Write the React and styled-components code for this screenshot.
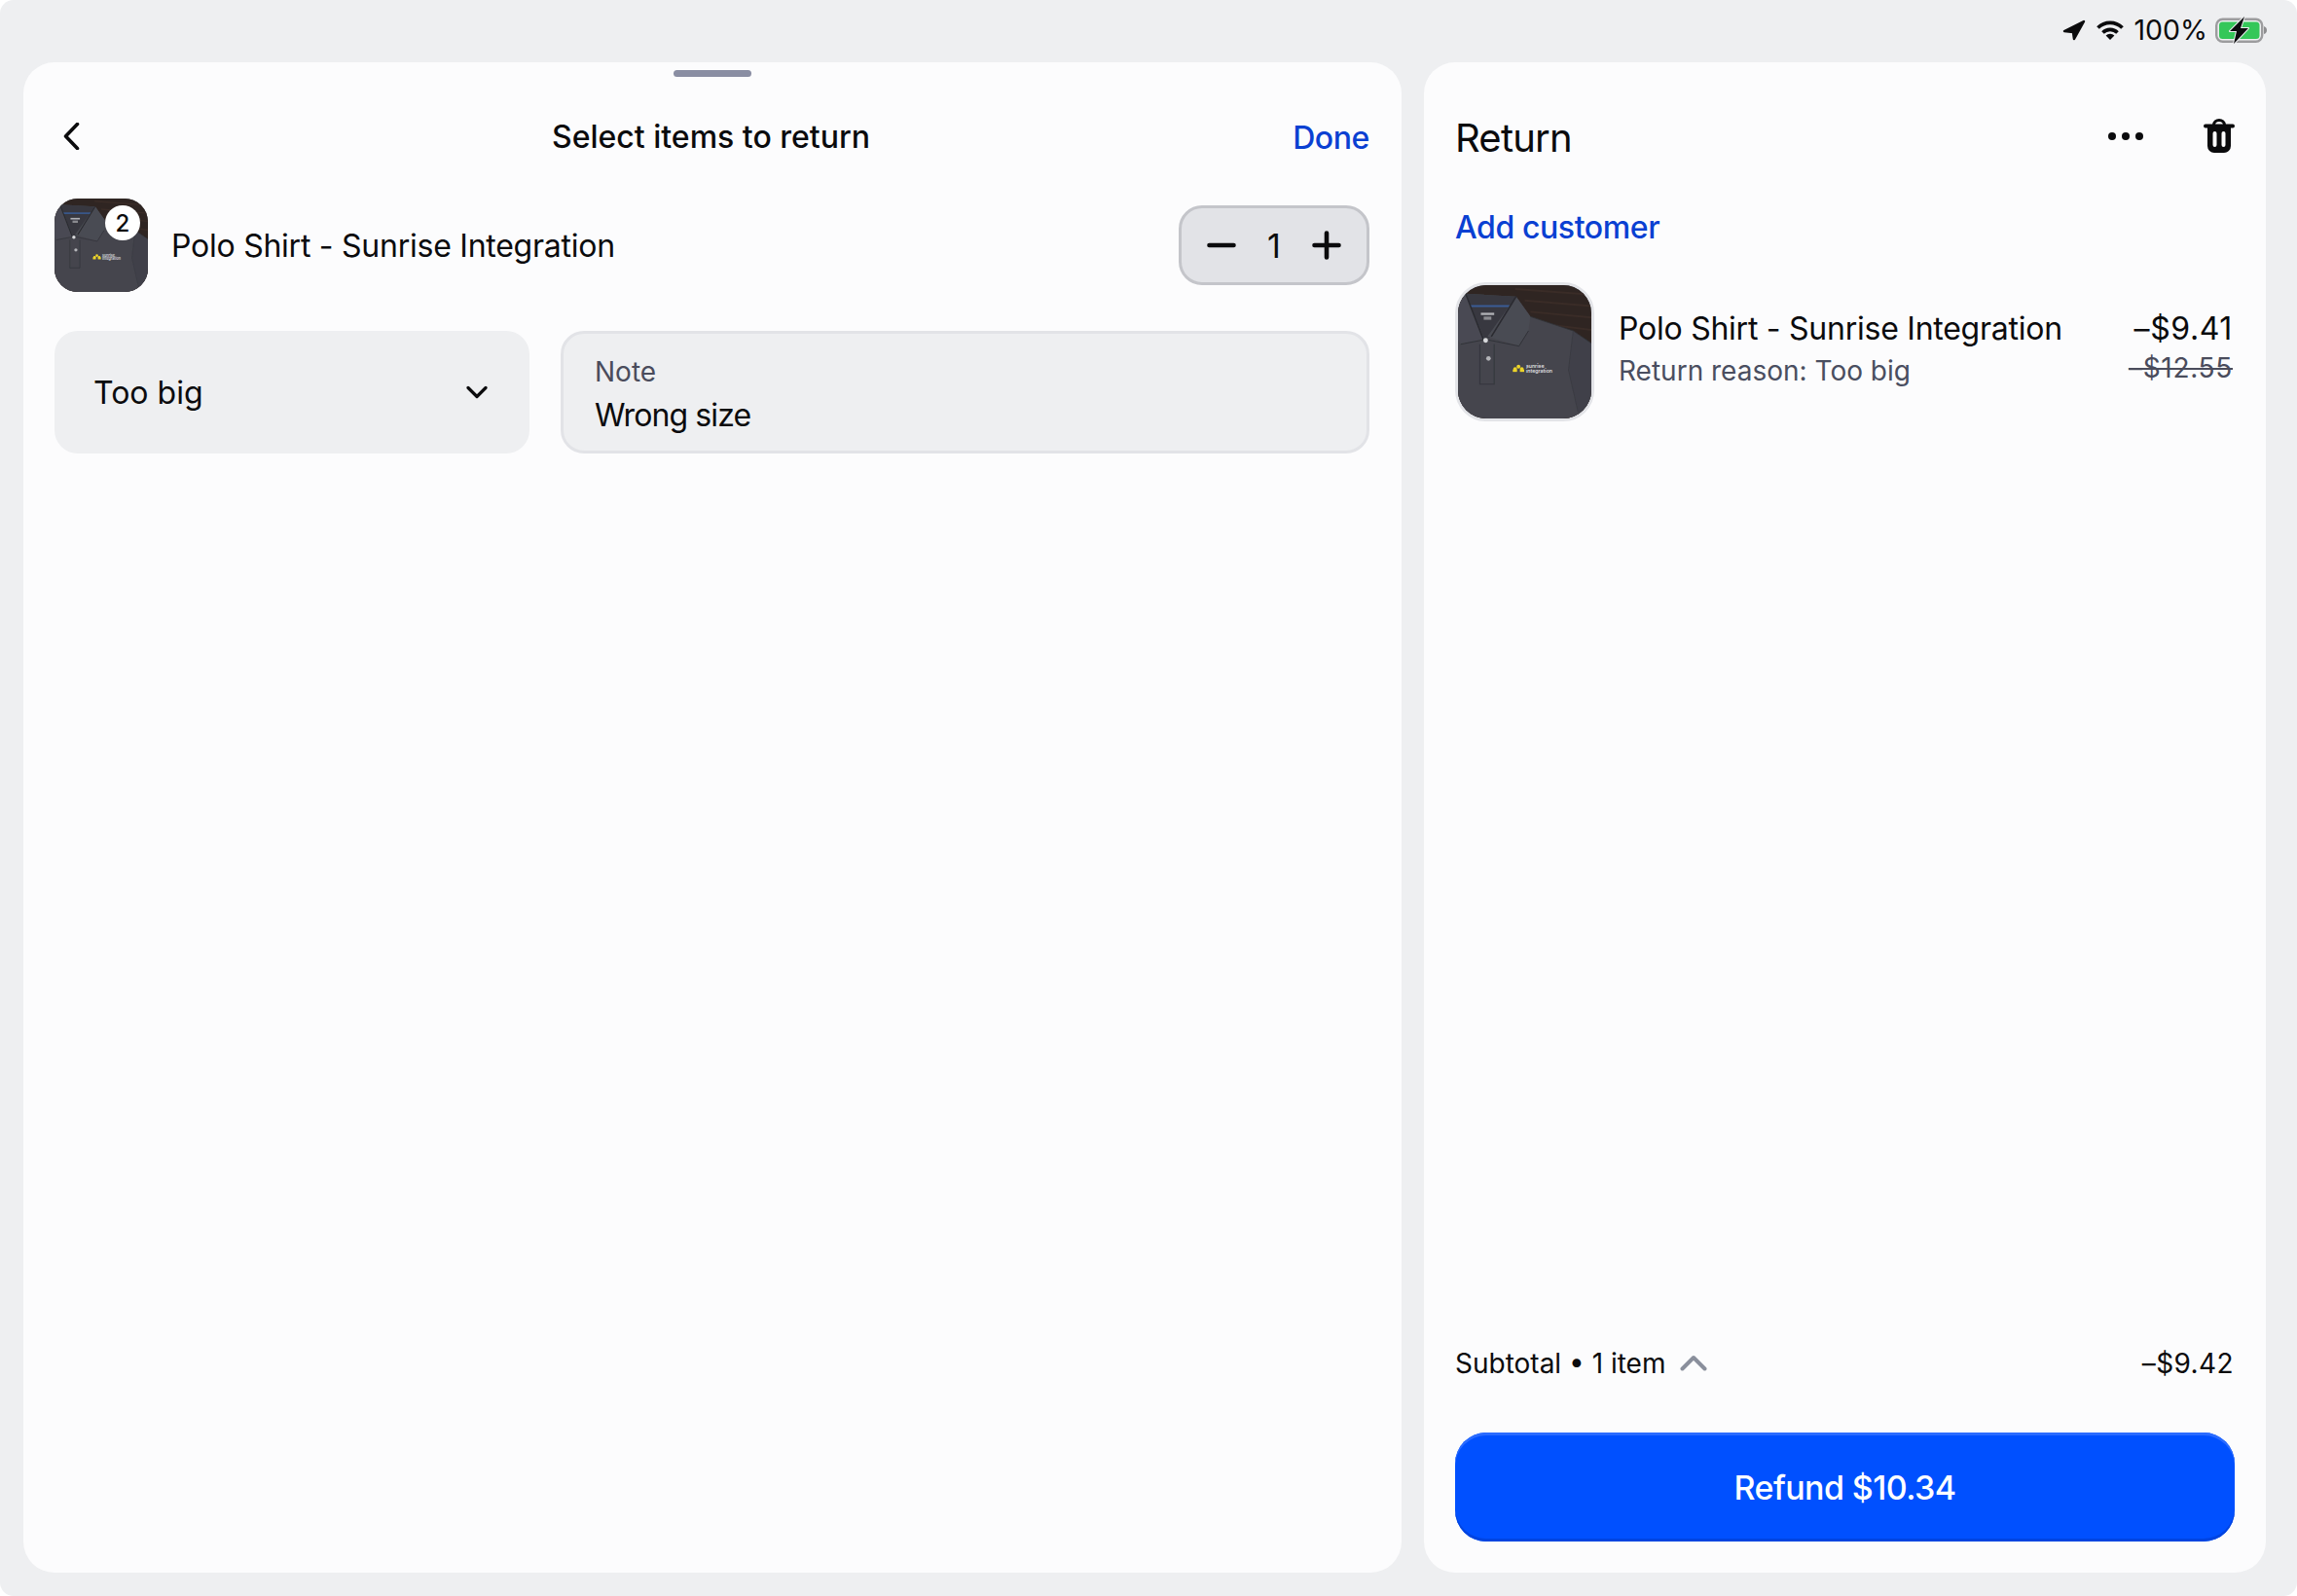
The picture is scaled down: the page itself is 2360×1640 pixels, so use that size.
import React from "react";
import styled, { createGlobalStyle } from "styled-components";

const Global = createGlobalStyle`
  html, body { margin: 0; padding: 0; background: #fff; }
  body { font-family: Inter, "Noto Sans", "Liberation Sans", sans-serif; color: #0b0b0d; }
  * { box-sizing: border-box; }
`;

const Screen = styled.div`
  width: 2360px;
  height: 1640px;
  background: #eeeff1;
  border-radius: 14px;
  display: flex;
  flex-direction: column;
  overflow: hidden;
`;

const StatusBar = styled.div`
  height: 64px;
  display: flex;
  align-items: center;
  justify-content: flex-end;
  padding: 0 30px 2px 0;
`;

const Bars = styled.div`
  display: flex;
  align-items: center;
`;

const StatusText = styled.span`
  font-size: 28.5px;
  line-height: 32px;
  margin: 0 8px 0 9px;
  color: #0b0b0d;
`;

const Main = styled.div`
  flex: 1;
  display: flex;
  gap: 23px;
  padding: 0 32px 24px 24px;
`;

const Panel = styled.section`
  background: #fcfcfd;
  border-radius: 32px;
  padding: 49px 32px ${(p) => p.$bottom || "49px"} 32px;
  display: flex;
  flex-direction: column;
  position: relative;
  width: ${(p) => p.$width || "auto"};
  flex: ${(p) => (p.$grow ? 1 : "none")};
`;

const Handle = styled.div`
  position: absolute;
  top: 8px;
  left: 50%;
  transform: translateX(-50%);
  width: 80px;
  height: 7px;
  border-radius: 4px;
  background: #8a8ea3;
`;

const NavHeader = styled.header`
  height: 56px;
  display: grid;
  grid-template-columns: 1fr auto 1fr;
  align-items: center;
  margin-bottom: 35px;
`;

const BackButton = styled.div`
  display: flex;
  align-items: center;
  padding: 0 0 2px 7px;
`;

const NavTitle = styled.h1`
  margin: 0 3px 0 0;
  font-size: 32px;
  font-weight: 500;
  line-height: 40px;
`;

const DoneLink = styled.span`
  justify-self: end;
  font-size: 32px;
  font-weight: 500;
  letter-spacing: -0.4px;
  margin-right: 1px;
  color: #0a40d2;
`;

const ItemRow = styled.div`
  height: 96px;
  display: flex;
  align-items: center;
  margin-bottom: 40px;
`;

const Thumb = styled.div`
  position: relative;
  flex: none;
  width: ${(p) => p.$size}px;
  height: ${(p) => p.$size}px;
  border-radius: ${(p) => p.$radius}px;
  overflow: hidden;
  border: ${(p) => (p.$framed ? "3px solid #e3e4e8" : "none")};
  background: #44454d;
  svg { display: block; width: 100%; height: 100%; }
`;

const QtyBadge = styled.span`
  position: absolute;
  top: 7px;
  left: 52px;
  width: 36px;
  height: 36px;
  border-radius: 50%;
  background: #fff;
  display: flex;
  align-items: center;
  justify-content: center;
  font-size: 24px;
  font-weight: 500;
  color: #0b0b0d;
`;

const ItemName = styled.div`
  font-size: 32px;
  line-height: 44px;
  letter-spacing: -0.25px;
  color: #0b0b0d;
`;

const RowName = styled(ItemName)`
  flex: 1;
  margin-left: 24px;
  padding-top: 2px;
`;

const Stepper = styled.div`
  width: 196px;
  height: 82px;
  border-radius: 24px;
  background: #e2e3e7;
  border: 3px solid #c4c5ca;
  display: flex;
  align-items: center;
  justify-content: space-between;
  padding: 0 26px;
  margin-right: 1px;
  font-size: 34px;
  color: #0b0b0d;
`;

const Fields = styled.div`
  display: grid;
  grid-template-columns: 488px 1fr;
  gap: 32px;
  margin-right: 1px;
`;

const SelectField = styled.div`
  height: 126px;
  border-radius: 24px;
  background: #eeeff1;
  display: flex;
  align-items: center;
  justify-content: space-between;
  padding: 0 43px 0 40px;
  font-size: 32px;
  color: #0b0b0d;
`;

const NoteField = styled.div`
  height: 126px;
  border-radius: 24px;
  background: #eeeff1;
  border: 3px solid #e2e3e7;
  display: flex;
  flex-direction: column;
  padding: 21px 32px 0;
`;

const NoteLabel = styled.span`
  font-size: 28px;
  line-height: 36px;
  color: #4a4c5c;
`;

const NoteValue = styled.span`
  font-size: 32px;
  line-height: 44px;
  margin-top: 5px;
  letter-spacing: -0.9px;
  color: #0b0b0d;
`;

const CartHeader = styled.header`
  height: 56px;
  display: flex;
  align-items: center;
  justify-content: space-between;
`;

const CartTitle = styled.h2`
  margin: 0;
  font-size: 40px;
  font-weight: 400;
  letter-spacing: -0.8px;
`;

const CartActions = styled.div`
  display: flex;
  align-items: center;
  gap: 62px;
  margin-top: -3px;
`;

const AddCustomer = styled.div`
  margin-top: 45px;
  font-size: 32px;
  font-weight: 500;
  line-height: 40px;
  letter-spacing: -0.4px;
  color: #0a40d2;
`;

const LineItem = styled.div`
  display: flex;
  margin-top: 36px;
`;

const LineText = styled.div`
  flex: 1;
  margin-left: 25px;
  padding-top: 26px;
`;

const SubText = styled.div`
  font-size: 28px;
  line-height: 40px;
  margin-top: 1px;
  color: #4a4e60;
`;

const Prices = styled.div`
  padding-top: 26px;
  padding-right: 2px;
  text-align: right;
`;

const Price = styled.div`
  font-size: 32px;
  line-height: 44px;
  letter-spacing: 0.6px;
  color: #0b0b0d;
`;

const OldPrice = styled.div`
  font-size: 28px;
  line-height: 36px;
  letter-spacing: 0.7px;
  color: #4a4c5c;
  text-decoration: line-through;
`;

const SummaryRow = styled.div`
  margin-top: auto;
  height: 40px;
  display: flex;
  align-items: center;
  justify-content: space-between;
  padding-right: 1px;
  font-size: 28px;
  color: #0b0b0d;
`;

const SummaryLabel = styled.div`
  display: flex;
  align-items: center;
  gap: 15px;
`;

const SummaryValue = styled.span`
  letter-spacing: 0.4px;
`;

const SummaryChevron = styled.svg`
  margin-top: -2px;
`;

const RefundButton = styled.button`
  margin-top: 51px;
  width: 100%;
  height: 112px;
  border: none;
  border-radius: 32px;
  background: #0050ff;
  box-shadow: inset 0 3px 0 #2a6bff, inset 0 -3px 0 #0044e0;
  color: #fff;
  font-family: inherit;
  font-size: 34px;
  font-weight: 500;
  letter-spacing: -0.6px;
`;

const ShirtPhoto = ({ id }) => (
  <svg viewBox="0 0 140 140" aria-hidden="true">
    <defs>
      <filter id={`soft-${id}`}><feGaussianBlur stdDeviation="0.8" /></filter>
    </defs>
    <rect width="140" height="140" fill="#2f2522" />
    <path d="M60 4 L140 10 M70 16 L140 22 M76 28 L140 34 M100 42 L140 47" stroke="#3a2c27" strokeWidth="2" />
    <path d="M0 0 L14 0 L0 14 Z" fill="#5a5048" />
    <g filter={`url(#soft-${id})`}>
      <path d="M0 12 L8 9 L61 12 L76 33 L121 48 L140 61 L140 140 L0 140 Z" fill="#44454d" />
      <path d="M121 48 L116 89 L126 133 L132 140 L140 140 L140 61 Z" fill="#404149" />
      <path d="M8 9 L61 12 L37 54 L28 57 Z" fill="#383940" />
      <path d="M12 22 L54 22" stroke="#3a5c96" strokeWidth="2.2" />
      <rect x="24" y="29" width="14" height="2.4" fill="#b0b1b6" />
      <rect x="27" y="33" width="8" height="3.4" fill="#8a8b90" />
      <path d="M0 12 L8 9 L27 58 L3 62 L0 58 Z" fill="#494a52" />
      <path d="M61 12 L76 33 L74 48 L64 64 L31 54 Z" fill="#4a4b53" />
      <path d="M8 9 L27 58 M61 12 L35 54" stroke="#2a2b30" strokeWidth="1.6" fill="none" />
      <path d="M3 62 L29 57 L64 64 L74 48" fill="none" stroke="#303137" strokeWidth="1" />
      <path d="M76 33 L121 48 L140 61" fill="none" stroke="#303136" strokeWidth="0.9" />
      <path d="M121 48 L116 89 L126 133" fill="none" stroke="#383940" strokeWidth="0.8" />
      <path d="M23 62 L23 104 L38 104 L38 62" fill="none" stroke="#35363c" strokeWidth="1.1" />
      <circle cx="29" cy="58" r="2.5" fill="#d8d9dc" />
      <circle cx="32" cy="77" r="2.4" fill="#b4b5b9" />
    </g>
    <g fill="#ecd42a">
      <circle cx="63.5" cy="85.5" r="2" />
      <circle cx="60" cy="88" r="2" />
      <circle cx="67" cy="88" r="2" />
      <rect x="57.5" y="88.5" width="4.5" height="2.6" />
      <rect x="65" y="88.5" width="4.5" height="2.6" />
    </g>
    <text x="71.5" y="87" fontSize="5.4" fontWeight="500" fontFamily="Inter, sans-serif" fill="#e8e8ea">sunrise</text>
    <text x="71.5" y="91.5" fontSize="5.4" fontWeight="500" fontFamily="Inter, sans-serif" fill="#e8e8ea">integration</text>
  </svg>
);

const App = () => (
  <>
    <Global />
    <Screen>
      <StatusBar>
        <Bars>
          <svg width="24" height="22" viewBox="0 0 24 22">
            <path d="M22 2 L2 12 L11 13 L12 20 Z" fill="#0b0b0d" stroke="#0b0b0d" strokeWidth="2.5" strokeLinejoin="round" />
          </svg>
          <svg width="30" height="22" viewBox="0 0 30 22" style={{ marginLeft: 10 }}>
            <path d="M2.5 8.5 A18 18 0 0 1 27.5 8.5" fill="none" stroke="#0b0b0d" strokeWidth="3.8" />
            <path d="M7.5 13.5 A10.5 10.5 0 0 1 22.5 13.5" fill="none" stroke="#0b0b0d" strokeWidth="3.6" />
            <path d="M15 21 L10.6 16.6 A6 6 0 0 1 19.4 16.6 Z" fill="#0b0b0d" />
          </svg>
          <StatusText>100%</StatusText>
          <svg width="54" height="30" viewBox="0 0 54 30">
            <rect x="1.2" y="3.7" width="47" height="23" rx="6.5" fill="none" stroke="#9c9c9e" strokeWidth="2.4" />
            <rect x="4" y="6.5" width="41.5" height="17.5" rx="3.5" fill="#34c759" />
            <path d="M50 11 Q53 12 53 15 Q53 18 50 19 Z" fill="#8e8e90" />
            <path d="M30 1 L15 16 H22 L19 29 L34 13 H26 Z" fill="#0b0b0d" stroke="#eeeff1" strokeWidth="2" paintOrder="stroke" strokeLinejoin="round" />
          </svg>
        </Bars>
      </StatusBar>
      <Main>
        <Panel $width="1416px">
          <Handle />
          <NavHeader>
            <BackButton>
              <svg width="20" height="28" viewBox="0 0 20 28">
                <path d="M16.5 1.5 L4.5 14 L16.5 26.5" fill="none" stroke="#0b0b0d" strokeWidth="3.6" strokeLinecap="round" strokeLinejoin="round" />
              </svg>
            </BackButton>
            <NavTitle>Select items to return</NavTitle>
            <DoneLink>Done</DoneLink>
          </NavHeader>
          <ItemRow>
            <Thumb $size={96} $radius={24}>
              <ShirtPhoto id="small" />
              <QtyBadge>2</QtyBadge>
            </Thumb>
            <RowName>Polo Shirt - Sunrise Integration</RowName>
            <Stepper>
              <svg width="30" height="6" viewBox="0 0 30 6">
                <path d="M2.5 3 H27.5" stroke="#0b0b0d" strokeWidth="4.6" strokeLinecap="round" />
              </svg>
              <span>1</span>
              <svg width="30" height="30" viewBox="0 0 30 30">
                <path d="M2.5 15 H27.5 M15 2.5 V27.5" stroke="#0b0b0d" strokeWidth="4.6" strokeLinecap="round" />
              </svg>
            </Stepper>
          </ItemRow>
          <Fields>
            <SelectField>
              <span>Too big</span>
              <svg width="22" height="14" viewBox="0 0 22 14">
                <path d="M2 2.5 L11 11.5 L20 2.5" fill="none" stroke="#0b0b0d" strokeWidth="3.2" strokeLinecap="round" strokeLinejoin="round" />
              </svg>
            </SelectField>
            <NoteField>
              <NoteLabel>Note</NoteLabel>
              <NoteValue>Wrong size</NoteValue>
            </NoteField>
          </Fields>
        </Panel>
        <Panel $grow $bottom="32px">
          <CartHeader>
            <CartTitle>Return</CartTitle>
            <CartActions>
              <svg width="36" height="10" viewBox="0 0 36 10">
                <circle cx="4" cy="5" r="4" fill="#0b0b0d" />
                <circle cx="18" cy="5" r="4" fill="#0b0b0d" />
                <circle cx="32" cy="5" r="4" fill="#0b0b0d" />
              </svg>
              <svg width="32" height="35" viewBox="0 0 32 35">
                <path d="M10.5 7 V6.5 A5.5 5 0 0 1 21.5 6.5 V7" fill="none" stroke="#0b0b0d" strokeWidth="3" />
                <rect x="0" y="5.5" width="32" height="4" rx="2" fill="#0b0b0d" />
                <path fillRule="evenodd" d="M4 8 H28 V28 A7 7 0 0 1 21 35 H11 A7 7 0 0 1 4 28 Z M11.5 13 A2 2 0 0 0 9.5 15 V27 A2 2 0 0 0 13.5 27 V15 A2 2 0 0 0 11.5 13 Z M20.5 13 A2 2 0 0 0 18.5 15 V27 A2 2 0 0 0 22.5 27 V15 A2 2 0 0 0 20.5 13 Z" fill="#0b0b0d" />
              </svg>
            </CartActions>
          </CartHeader>
          <AddCustomer>Add customer</AddCustomer>
          <LineItem>
            <Thumb $size={143} $radius={32} $framed>
              <ShirtPhoto id="large" />
            </Thumb>
            <LineText>
              <ItemName>Polo Shirt - Sunrise Integration</ItemName>
              <SubText>Return reason: Too big</SubText>
            </LineText>
            <Prices>
              <Price>–$9.41</Price>
              <OldPrice>–$12.55</OldPrice>
            </Prices>
          </LineItem>
          <SummaryRow>
            <SummaryLabel>
              <span>Subtotal • 1 item</span>
              <SummaryChevron width="28" height="17" viewBox="0 0 28 17">
                <path d="M2.5 14.5 L14 3 L25.5 14.5" fill="none" stroke="#8a8f9c" strokeWidth="4" strokeLinecap="round" strokeLinejoin="round" />
              </SummaryChevron>
            </SummaryLabel>
            <SummaryValue>–$9.42</SummaryValue>
          </SummaryRow>
          <RefundButton>Refund $10.34</RefundButton>
        </Panel>
      </Main>
    </Screen>
  </>
);

export default App;
